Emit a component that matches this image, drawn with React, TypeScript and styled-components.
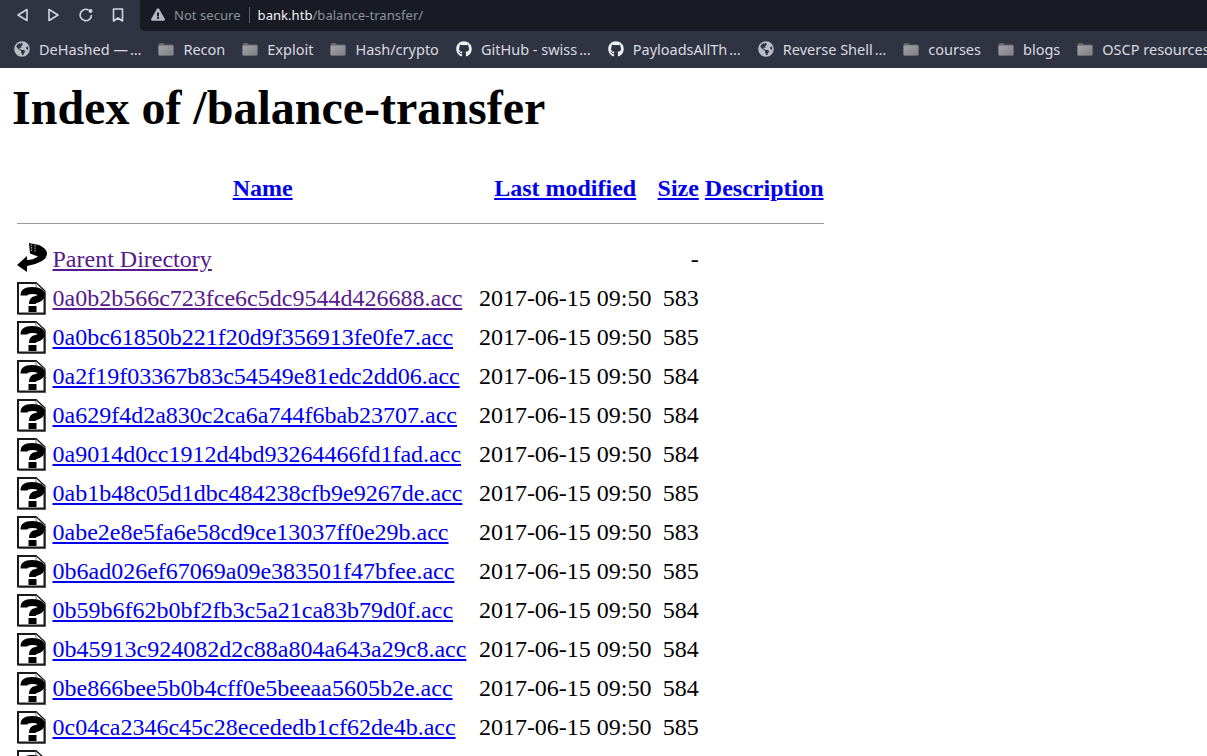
import React, { FC } from "react";
import styled, { createGlobalStyle } from "styled-components";
import { FaGithub, FaGlobeAmericas, FaExclamationTriangle } from "react-icons/fa";

const GlobalStyle = createGlobalStyle`
  html, body {
    margin: 0;
    height: 756px;
    overflow: hidden;
    background: #fff;
  }
`;

const Toolbar = styled.div`
  display: flex;
  height: 31px;
  background: #2f3342;
`;

const NavButtons = styled.div`
  display: flex;
  align-items: center;
  width: 140px;
  flex: none;
  padding: 0 0 1px 14px;
  box-sizing: border-box;
  gap: 16px;
`;

const NavIcon = styled.svg`
  display: block;
  width: 16px;
  height: 16px;
  fill: none;
  stroke: #d3d6dd;
  stroke-width: 1.6;
  stroke-linejoin: round;
`;

const AddressBar = styled.div`
  flex: 1;
  display: flex;
  align-items: center;
  background: #181b24;
  border-bottom-left-radius: 5px;
  padding: 0 0 2px 11px;
  font: 13.1px "Noto Sans", sans-serif;
  color: #8c909b;
`;

const Warning = styled(FaExclamationTriangle)`
  width: 14px;
  height: 13px;
  color: #b5b8c0;
  margin-right: 9px;
`;

const Divider = styled.span`
  width: 1px;
  height: 16px;
  background: #5c606b;
  margin: 0 8px 0 8px;
`;

const Host = styled.span`
  color: #f2f3f5;
`;

const BookmarksBar = styled.div`
  display: flex;
  align-items: center;
  height: 37px;
  box-sizing: border-box;
  background: #2f3342;
  padding: 0 0 2px 14px;
  gap: 17px;
  white-space: nowrap;
  overflow: hidden;
`;

const Bookmark = styled.div`
  display: flex;
  align-items: center;
  flex: none;
  gap: 9px;
  font: 14.5px "Noto Sans", sans-serif;
  color: #d9dbe0;
`;

const Ellipsis = styled.span`
  padding-left: 2px;
`;

const Globe = styled(FaGlobeAmericas)`
  width: 16px;
  height: 16px;
  color: #b9bcc4;
`;

const Octocat = styled(FaGithub)`
  width: 16px;
  height: 16px;
  color: #f2f3f5;
`;

const FolderSvg = styled.svg`
  display: block;
  width: 16px;
  height: 14px;
`;

const Page = styled.div`
  margin: 12px;
  color: #000;
  font: 24px "Liberation Serif", serif;
`;

const Title = styled.h1`
  font-size: 48px;
  font-weight: 700;
  margin: 0 0 32px;
`;

const Listing = styled.table`
  border-spacing: 3px;
  border-collapse: separate;
  font-size: 24px;

  th, td {
    padding: 1.5px;
  }
`;

const HeadCell = styled.th`
  font-weight: 700;
  text-align: center;
  && {
    padding-top: 4.5px;
    padding-bottom: 4.5px;
  }
`;

const RuleLine = styled.hr`
  border: 0;
  border-top: 1px solid #9a9a9a;
  margin: 12px 0 13px;
`;

const IconCell = styled.td`
  vertical-align: top;
`;

const NameCell = styled.td`
  && {
    padding-right: 8px;
  }
`;

const DateCell = styled.td`
  text-align: right;
`;

const SizeCell = styled.td`
  text-align: right;
`;

const FileLink = styled.a<{ $visited?: boolean }>`
  color: ${(p) => (p.$visited ? "#551a8b" : "#0000ee")};
  text-decoration: underline;
`;

const HeadLink = styled.a`
  color: #0000ee;
  text-decoration: underline;
`;

const IconSvg = styled.svg`
  display: block;
  width: 30px;
  height: 33px;
`;

const Folder: FC = () => (
  <FolderSvg viewBox="0 0 16 14">
    <defs>
      <linearGradient id="folderFill" x1="0" y1="0" x2="1" y2="1">
        <stop offset="0" stopColor="#a3a4a9" />
        <stop offset="1" stopColor="#7d7e83" />
      </linearGradient>
    </defs>
    <path d="M0.5 2.5 Q0.5 1 2 1 H5.5 L7 2.5 H14.5 Q15.5 2.5 15.5 3.5 V12.5 Q15.5 13.5 14.5 13.5 H1.5 Q0.5 13.5 0.5 12.5 Z" fill="#66676c" />
    <rect x="0.5" y="3.5" width="15" height="10" rx="1" fill="url(#folderFill)" />
  </FolderSvg>
);

const UnknownIcon: FC = () => (
  <IconSvg viewBox="0 0 30 33">
    <path d="M1 1 H19 L27.5 9 V31.5 H1 Z" fill="#fff" stroke="#1a1a1a" strokeWidth="2" />
    <path d="M19 1.5 V9.5 H27.5" fill="#fff" stroke="#777" strokeWidth="1" />
    <path d="M28.5 10 V32.5 H2" fill="none" stroke="#555" strokeWidth="1" />
    <path d="M7 13.5 Q7 8.5 15 8.5 Q24 8.5 24 13 Q24 16.5 19 17.5 Q15.5 18 15.5 22" fill="none" stroke="#000" strokeWidth="7" />
    <rect x="11.5" y="24" width="8" height="6" fill="#000" />
  </IconSvg>
);

const BackIcon: FC = () => (
  <IconSvg viewBox="0 0 30 33">
    <path d="M12 0 L22 2 Q29 5 30 10 Q30 15 25 18 Q18 22 10 23 V29 L0 22 L10 13 V17 Q16 17 21 13.5 L13 10.5 Z" fill="#000" />
    <path d="M14.5 1.5 V9 M18 2 V9.5" stroke="#a0a0a0" strokeWidth="1.3" strokeDasharray="1.5 1" />
  </IconSvg>
);

type Row = { name: string; size: number; visited?: boolean };

const rows: Row[] = [
  { name: "0a0b2b566c723fce6c5dc9544d426688.acc", size: 583, visited: true },
  { name: "0a0bc61850b221f20d9f356913fe0fe7.acc", size: 585 },
  { name: "0a2f19f03367b83c54549e81edc2dd06.acc", size: 584 },
  { name: "0a629f4d2a830c2ca6a744f6bab23707.acc", size: 584 },
  { name: "0a9014d0cc1912d4bd93264466fd1fad.acc", size: 584 },
  { name: "0ab1b48c05d1dbc484238cfb9e9267de.acc", size: 585 },
  { name: "0abe2e8e5fa6e58cd9ce13037ff0e29b.acc", size: 583 },
  { name: "0b6ad026ef67069a09e383501f47bfee.acc", size: 585 },
  { name: "0b59b6f62b0bf2fb3c5a21ca83b79d0f.acc", size: 584 },
  { name: "0b45913c924082d2c88a804a643a29c8.acc", size: 584 },
  { name: "0be866bee5b0b4cff0e5beeaa5605b2e.acc", size: 584 },
  { name: "0c04ca2346c45c28ecededb1cf62de4b.acc", size: 585 },
];

const bookmarks: { label: string; icon: "globe" | "folder" | "github"; cut?: boolean }[] = [
  { label: "DeHashed —", icon: "globe", cut: true },
  { label: "Recon", icon: "folder" },
  { label: "Exploit", icon: "folder" },
  { label: "Hash/crypto", icon: "folder" },
  { label: "GitHub - swiss", icon: "github", cut: true },
  { label: "PayloadsAllTh", icon: "github", cut: true },
  { label: "Reverse Shell", icon: "globe", cut: true },
  { label: "courses", icon: "folder" },
  { label: "blogs", icon: "folder" },
  { label: "OSCP resources", icon: "folder" },
];

const App = () => {
  return (
    <div>
      <GlobalStyle />
      <Toolbar>
        <NavButtons>
          <NavIcon viewBox="0 0 16 16">
            <path d="M4 8 L13 2.5 V13.5 Z" />
          </NavIcon>
          <NavIcon viewBox="0 0 16 16">
            <path d="M12 8 L3 2.5 V13.5 Z" />
          </NavIcon>
          <NavIcon viewBox="0 0 16 16">
            <path d="M13.5 8 A5.7 5.7 0 1 1 10.5 3" />
            <circle cx="12.5" cy="4" r="2" fill="#d3d6dd" stroke="none" />
          </NavIcon>
          <NavIcon viewBox="0 0 16 16">
            <path d="M3.5 2 H12.5 V14 L8 11 L3.5 14 Z" />
          </NavIcon>
        </NavButtons>
        <AddressBar>
          <Warning />
          Not secure
          <Divider />
          <Host>bank.htb</Host>/balance-transfer/
        </AddressBar>
      </Toolbar>
      <BookmarksBar>
        {bookmarks.map((b) => (
          <Bookmark key={b.label}>
            {b.icon === "globe" && <Globe />}
            {b.icon === "github" && <Octocat />}
            {b.icon === "folder" && <Folder />}
            <span>
              {b.label}
              {b.cut && <Ellipsis>…</Ellipsis>}
            </span>
          </Bookmark>
        ))}
      </BookmarksBar>
      <Page>
        <Title>Index of /balance-transfer</Title>
        <Listing>
          <thead>
            <tr>
              <HeadCell />
              <HeadCell>
                <HeadLink href="#">Name</HeadLink>
              </HeadCell>
              <HeadCell>
                <HeadLink href="#">Last modified</HeadLink>
              </HeadCell>
              <HeadCell>
                <HeadLink href="#">Size</HeadLink>
              </HeadCell>
              <HeadCell>
                <HeadLink href="#">Description</HeadLink>
              </HeadCell>
            </tr>
            <tr>
              <th colSpan={5}>
                <RuleLine />
              </th>
            </tr>
          </thead>
          <tbody>
            <tr>
              <IconCell>
                <BackIcon />
              </IconCell>
              <NameCell>
                <FileLink href="#" $visited>
                  Parent Directory
                </FileLink>
              </NameCell>
              <DateCell />
              <SizeCell>-</SizeCell>
              <td />
            </tr>
            {rows.map((r) => (
              <tr key={r.name}>
                <IconCell>
                  <UnknownIcon />
                </IconCell>
                <NameCell>
                  <FileLink href="#" $visited={r.visited}>
                    {r.name}
                  </FileLink>
                </NameCell>
                <DateCell>2017-06-15 09:50</DateCell>
                <SizeCell>{r.size}</SizeCell>
                <td />
              </tr>
            ))}
            <tr>
              <IconCell>
                <UnknownIcon />
              </IconCell>
            </tr>
          </tbody>
        </Listing>
      </Page>
    </div>
  );
};

export default App;
